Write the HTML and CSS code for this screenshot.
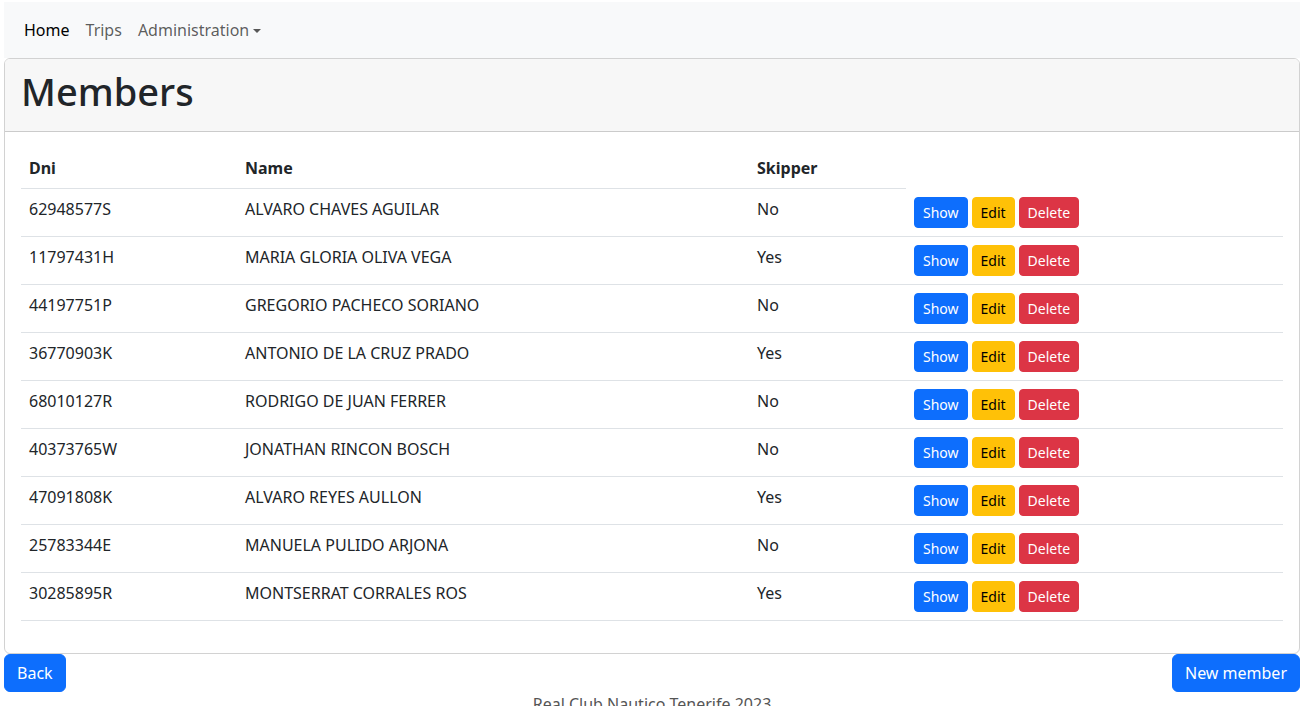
FILE: index.html
```html
<!DOCTYPE html>
<html lang="en">
<head>
<meta charset="utf-8">
<title>Members</title>
<link rel="stylesheet" href="styles.css">
</head>
<body>
<nav class="navbar">
  <a class="nav-link active" href="#">Home</a>
  <a class="nav-link" href="#">Trips</a>
  <a class="nav-link dropdown" href="#">Administration<span class="caret"></span></a>
</nav>
<div class="card">
  <div class="card-header"><h1>Members</h1></div>
  <div class="card-body">
    <table class="table">
      <colgroup><col class="c1"><col class="c2"><col class="c3"><col></colgroup>
      <thead>
        <tr><th>Dni</th><th>Name</th><th>Skipper</th></tr>
      </thead>
      <tbody>
        <tr><td>62948577S</td><td>ALVARO CHAVES AGUILAR</td><td>No</td><td class="actions"><a class="btn show">Show</a><a class="btn edit">Edit</a><a class="btn del">Delete</a></td></tr>
        <tr><td>11797431H</td><td>MARIA GLORIA OLIVA VEGA</td><td>Yes</td><td class="actions"><a class="btn show">Show</a><a class="btn edit">Edit</a><a class="btn del">Delete</a></td></tr>
        <tr><td>44197751P</td><td>GREGORIO PACHECO SORIANO</td><td>No</td><td class="actions"><a class="btn show">Show</a><a class="btn edit">Edit</a><a class="btn del">Delete</a></td></tr>
        <tr><td>36770903K</td><td>ANTONIO DE LA CRUZ PRADO</td><td>Yes</td><td class="actions"><a class="btn show">Show</a><a class="btn edit">Edit</a><a class="btn del">Delete</a></td></tr>
        <tr><td>68010127R</td><td>RODRIGO DE JUAN FERRER</td><td>No</td><td class="actions"><a class="btn show">Show</a><a class="btn edit">Edit</a><a class="btn del">Delete</a></td></tr>
        <tr><td>40373765W</td><td>JONATHAN RINCON BOSCH</td><td>No</td><td class="actions"><a class="btn show">Show</a><a class="btn edit">Edit</a><a class="btn del">Delete</a></td></tr>
        <tr><td>47091808K</td><td>ALVARO REYES AULLON</td><td>Yes</td><td class="actions"><a class="btn show">Show</a><a class="btn edit">Edit</a><a class="btn del">Delete</a></td></tr>
        <tr><td>25783344E</td><td>MANUELA PULIDO ARJONA</td><td>No</td><td class="actions"><a class="btn show">Show</a><a class="btn edit">Edit</a><a class="btn del">Delete</a></td></tr>
        <tr><td>30285895R</td><td>MONTSERRAT CORRALES ROS</td><td>Yes</td><td class="actions"><a class="btn show">Show</a><a class="btn edit">Edit</a><a class="btn del">Delete</a></td></tr>
      </tbody>
    </table>
  </div>
</div>
<div class="bottom">
  <a class="btn-lg" href="#">Back</a>
  <a class="btn-lg" href="#">New member</a>
</div>
<footer class="footer">Real Club Nautico Tenerife 2023</footer>
</body>
</html>
```
FILE: styles.css
```css
html, body { margin: 0; padding: 0; }
body {
  font-family: "Noto Sans", "Open Sans", sans-serif;
  font-size: 16px;
  line-height: 24px;
  color: #212529;
  background: #fff;
  padding: 2px 4px 0 4px;
  overflow: hidden;
}
a { text-decoration: none; }
.navbar {
  display: flex;
  align-items: center;
  background: #f8f9fa;
  height: 56px;
  padding: 0 12px;
  box-sizing: border-box;
}
.nav-link {
  padding: 8px;
  color: rgba(0,0,0,.65);
  display: flex;
  align-items: center;
}
.nav-link.active { color: rgba(0,0,0,1); }
.caret {
  display: inline-block;
  margin-left: 4px;
  border-top: 4px solid rgba(0,0,0,.65);
  border-left: 4px solid transparent;
  border-right: 4px solid transparent;
  margin-top: 2px;
}
.card {
  border: 1px solid rgba(0,0,0,.175);
  border-radius: 6px;
  overflow: hidden;
}
.card-header {
  background: #f7f7f7;
  border-bottom: 1px solid rgba(0,0,0,.175);
  padding: 8px 16px;
  height: 73px;
  box-sizing: border-box;
}
.card-header h1 {
  margin: 0 0 8px 0;
  font-size: 38px;
  line-height: 48px;
  font-weight: 500;
}
.card-body { padding: 16px; }
.table {
  width: 100%;
  border-collapse: collapse;
  margin-bottom: 16px;
  table-layout: fixed;
}
.c1 { width: 216px; }
.c2 { width: 512px; }
.c3 { width: 157px; }
.table th, .table td {
  padding: 8px;
  text-align: left;
  vertical-align: top;
}
.table th { font-weight: 700; border-bottom: 1px solid #dee2e6; }
.table td { border-bottom: 1px solid #dee2e6; }
.actions { display: flex; gap: 4px; }
.btn {
  display: inline-block;
  font-size: 14px;
  line-height: 21px;
  padding: 4px 8px;
  border: 1px solid transparent;
  border-radius: 4px;
  color: #fff;
  cursor: pointer;
}
.show { background: #0d6efd; border-color: #0d6efd; }
.edit { background: #ffc107; border-color: #ffc107; color: #000; }
.del { background: #dc3545; border-color: #dc3545; }
.bottom {
  display: flex;
  justify-content: space-between;
}
.btn-lg {
  background: #0d6efd;
  color: #fff;
  padding: 6px 12px;
  border-radius: 6px;
  line-height: 24px;
  font-size: 16px;
  height: 38px;
  box-sizing: border-box;
  border: 1px solid #0d6efd;
}
.footer {
  text-align: center;
  color: #555;
}
```
